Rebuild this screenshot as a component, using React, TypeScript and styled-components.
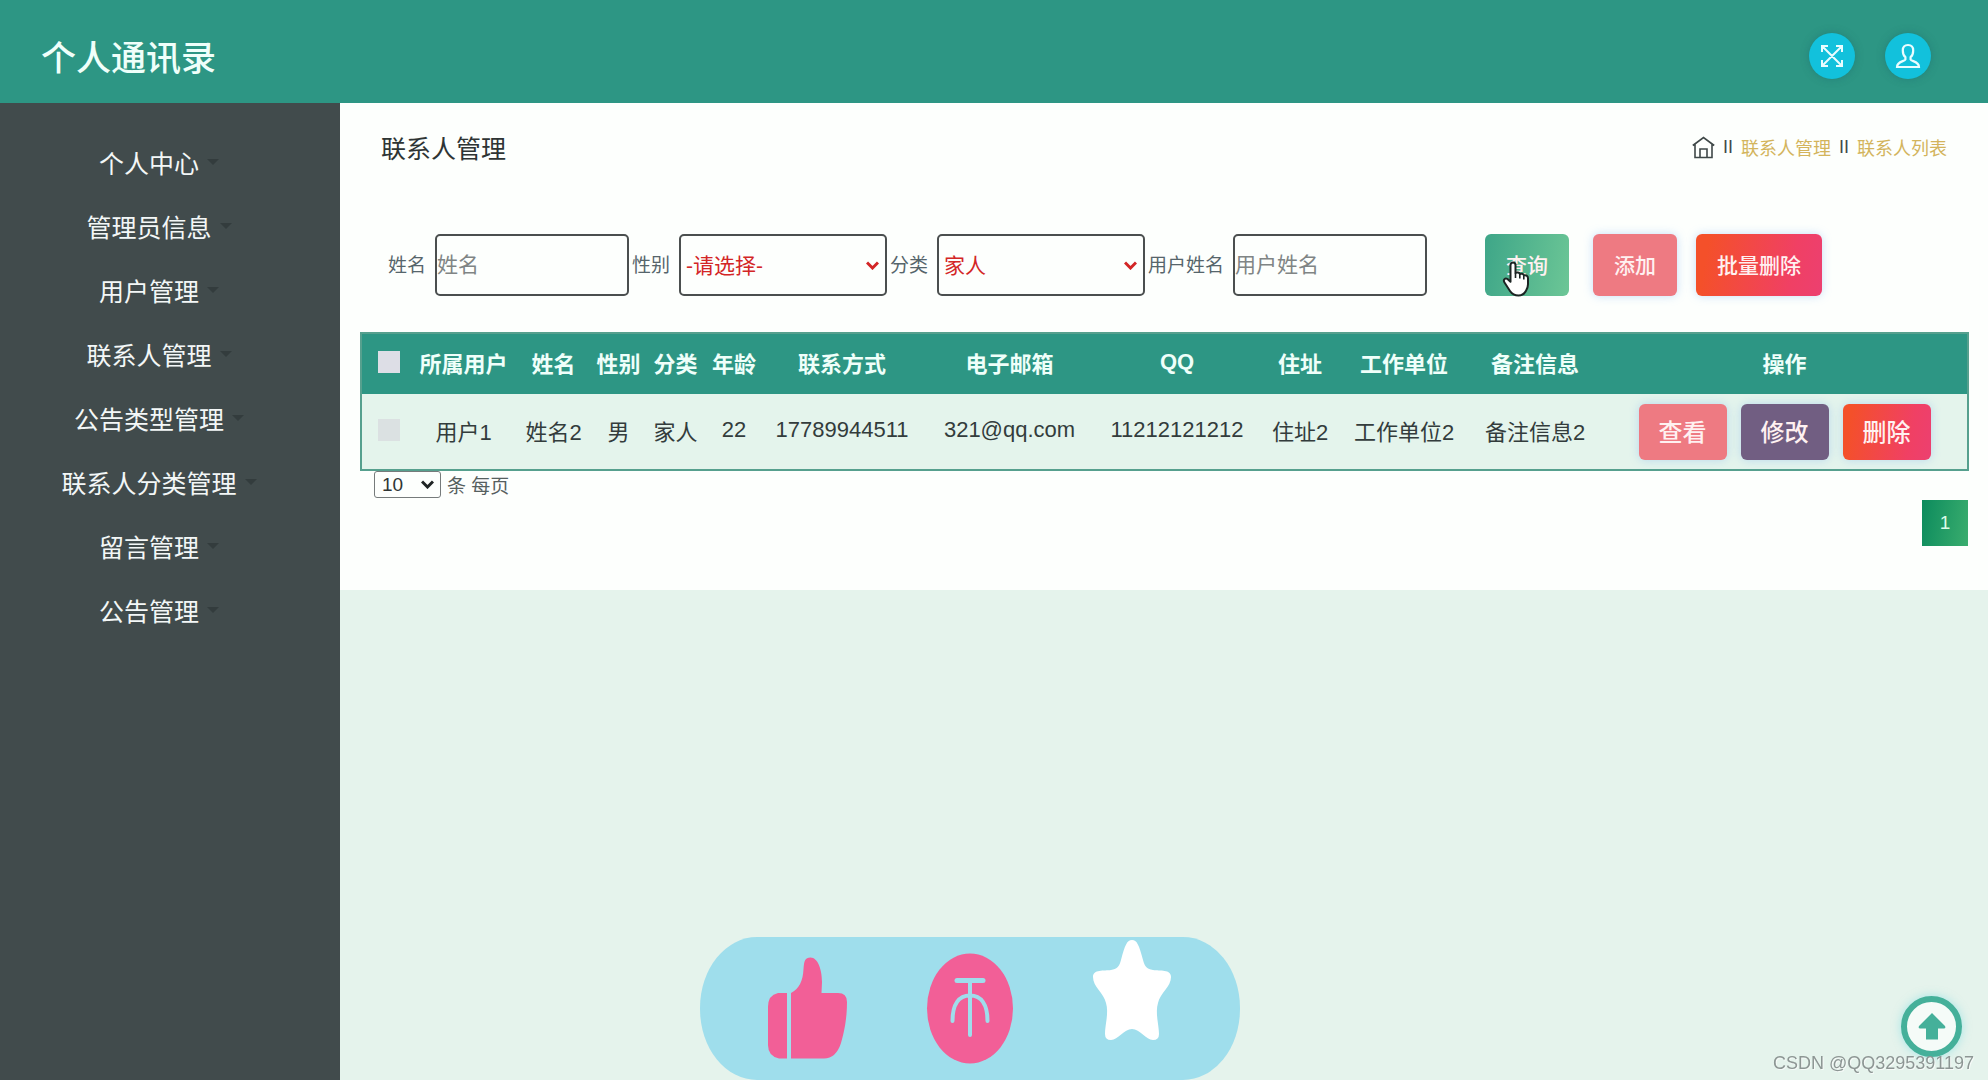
import React, { useState } from "react";
import styled, { createGlobalStyle, css } from "styled-components";

const GlobalStyle = createGlobalStyle`
  *, *::before, *::after { box-sizing: border-box; }
  body {
    margin: 0;
    background: #e5f3ec;
    color: #333c3c;
    font-family: "Liberation Sans", "Noto Sans CJK SC", sans-serif;
    font-size: 19px;
  }
  button, input, select { font-family: inherit; margin: 0; }
  a { color: inherit; text-decoration: none; }
`;

const Page = styled.div`
  display: flex;
  flex-direction: column;
  min-height: 100vh;
`;

const Header = styled.header`
  display: flex;
  align-items: center;
  justify-content: space-between;
  padding: 33px 57px 24px 41px;
  background: #2d9684;
`;

const Brand = styled.h1`
  margin: 0;
  padding-top: 6px;
  color: #effffa;
  font-size: 35px;
  font-weight: 500;
  line-height: 40px;
`;

const HeaderActions = styled.div`
  display: flex;
  gap: 30px;
`;

const RoundButton = styled.button`
  display: grid;
  place-items: center;
  width: 46px;
  height: 46px;
  padding: 0;
  border: 0;
  border-radius: 50%;
  background: #12c1dc;
  box-shadow: 0 0 8px rgba(20, 90, 100, 0.35);
  color: #e9fdff;
  cursor: pointer;
`;

const Body = styled.div`
  display: flex;
  flex: 1;
`;

const Sidebar = styled.nav`
  flex: 0 0 340px;
  padding: 27px 22px 27px 0;
  background: #414b4c;
`;

const Menu = styled.ul`
  margin: 0;
  padding: 0;
  list-style: none;
`;

const MenuLink = styled.a`
  display: flex;
  align-items: center;
  justify-content: center;
  gap: 8px;
  height: 64px;
  color: #f3f7f7;
  font-size: 25px;

  &::after {
    content: "";
    border: 6px solid transparent;
    border-top-color: #333c3d;
    border-bottom: 0;
  }
`;

const Main = styled.main`
  flex: 1;
  min-width: 0;
`;

const Panel = styled.section`
  padding: 26px 19px 44px 20px;
  background: #fdfffd;
`;

const PanelHead = styled.div`
  display: flex;
  align-items: center;
  justify-content: space-between;
  height: 36px;
  padding: 0 22px 0 21px;
`;

const PanelTitle = styled.h2`
  margin: 0;
  color: #2e3434;
  font-size: 25px;
  font-weight: 400;
`;

const Crumbs = styled.nav`
  display: flex;
  align-items: center;
  gap: 8px;
  color: #3f4848;
  font-size: 18px;
`;

const HomeLink = styled.a`
  display: grid;
`;

const CrumbLink = styled.a`
  color: #d3b45c;
`;

const Filters = styled.form`
  display: flex;
  align-items: center;
  margin: 69px 0 36px;
  padding-left: 28px;
`;

const Field = styled.div`
  display: flex;
  align-items: center;
  gap: 9px;
  margin-right: 3px;
`;

const FieldLabel = styled.label`
  padding-bottom: 4px;
  color: #56656b;
  font-size: 19px;
  white-space: nowrap;
`;

const control = css`
  height: 62px;
  border: 2px solid #4b4f4f;
  border-radius: 5px;
  background: #fdfffd;
  font-size: 21px;
`;

const TextInput = styled.input`
  ${control}
  width: 194px;
  padding: 0;
  color: #333c3c;

  &::placeholder { color: #808585; opacity: 1; }
`;

const SelectBox = styled.span<{ $inset: number }>`
  display: grid;
  align-items: center;

  > * { grid-area: 1 / 1; }
  > svg {
    justify-self: end;
    margin-right: ${(p) => p.$inset}px;
    pointer-events: none;
  }
`;

const FilterSelect = styled.select`
  ${control}
  appearance: none;
  width: 208px;
  padding: 0 5px;
  color: #d32626;
`;

const SizeSelect = styled.select`
  appearance: none;
  width: 67px;
  height: 27px;
  padding: 0 7px;
  border: 1px solid #767b7b;
  border-radius: 3px;
  background: #fdfffd;
  color: #2f3535;
  font-size: 19px;
`;

type Tone = "green" | "pink" | "purple" | "red";

const tones: Record<Tone, string> = {
  green: "linear-gradient(100deg, #3ea688, #6cc696)",
  pink: "#ee7a82",
  purple: "#715e82",
  red: "linear-gradient(100deg, #f4502a 10%, #f04064 75%, #ec4070)",
};

const Button = styled.button<{ $tone: Tone; $compact?: boolean }>`
  height: ${(p) => (p.$compact ? 56 : 62)}px;
  padding: 0 ${(p) => (p.$compact ? 20 : 21)}px 3px;
  border: 0;
  border-radius: 6px;
  background: ${(p) => tones[p.$tone]};
  box-shadow: ${(p) => (p.$tone === "green" ? "none" : "0 0 10px rgba(120, 175, 240, 0.4)")};
  color: #fff1f1;
  font-size: ${(p) => (p.$compact ? 24 : 21)}px;
  font-weight: 500;
  white-space: nowrap;
  cursor: pointer;
`;

const FilterActions = styled.div`
  display: flex;
  gap: 19px;
  margin-left: 55px;
`;

const SearchSlot = styled.div`
  position: relative;
  margin-right: 5px;
`;

const Pointer = styled.svg`
  position: absolute;
  left: 17px;
  top: 27px;
  pointer-events: none;
`;

const Table = styled.table`
  width: 100%;
  table-layout: fixed;
  border: 2px solid #56a08e;
  border-spacing: 0;
  background: #e4f4ec;
  font-size: 22px;
  text-align: center;
  white-space: nowrap;
`;

const HeadCell = styled.th`
  height: 60px;
  padding: 0 0 4px;
  background: #2d9684;
  color: #effffa;
`;

const Cell = styled.td`
  height: 75px;
  padding: 0 0 4px;
`;

const ActionCell = styled.td`
  padding: 0;
`;

const Check = styled.input<{ $faint?: boolean }>`
  appearance: none;
  display: block;
  width: 22px;
  height: 22px;
  margin: 0 auto;
  background: ${(p) => (p.$faint ? "#dbe1e2" : "#dddee6")};

  &:checked { background: #12c1dc; }
`;

const RowActions = styled.div`
  display: flex;
  justify-content: center;
  gap: 14px;
`;

const PageSize = styled.div`
  display: flex;
  align-items: center;
  gap: 6px;
  padding-left: 14px;
  color: #56605f;
`;

const Pagination = styled.nav`
  display: flex;
  justify-content: flex-end;
  margin-top: 2px;
  padding-right: 1px;
`;

const PageLink = styled.a`
  display: grid;
  place-items: center;
  width: 46px;
  height: 46px;
  background: linear-gradient(100deg, #0c8b5d, #3aad6e);
  color: #dcfbe8;
`;

const ReactionBar = styled.div`
  position: fixed;
  bottom: 0;
  left: 700px;
  width: 540px;
  height: 143px;
  border-radius: 57px / 71px;
  background: #9fdeec;
`;

const BackToTop = styled.button`
  position: fixed;
  right: 26px;
  bottom: 23px;
  display: grid;
  place-items: center;
  width: 61px;
  height: 61px;
  padding: 0;
  border: 6px solid #45b09a;
  border-radius: 50%;
  background: #f5fbf8;
  box-shadow: 0 0 10px rgba(100, 215, 225, 0.5);
  cursor: pointer;
`;

const Watermark = styled.div`
  position: fixed;
  right: 14px;
  bottom: 6px;
  color: #8d9694;
  font-size: 18px;
  line-height: 21px;
  text-shadow: 1px 1px 0 #f6faf8;
`;

const Chevron = ({ color }: { color: string }) => (
  <svg width="13" height="9" viewBox="0 0 13 9" fill="none" stroke={color} strokeWidth="3" aria-hidden="true">
    <path d="M1 1.5 6.5 7 12 1.5" />
  </svg>
);

const ExpandIcon = () => (
  <svg width="24" height="24" viewBox="0 0 24 24" fill="none" stroke="currentColor" strokeWidth="2" aria-hidden="true">
    <path d="M2 8V2h6M16 2h6v6M22 16v6h-6M8 22H2v-6M2.5 2.5l19 19M21.5 2.5l-19 19" />
  </svg>
);

const UserIcon = () => (
  <svg width="26" height="26" viewBox="0 0 26 26" fill="none" stroke="currentColor" strokeWidth="2.2" aria-hidden="true">
    <path d="M13 2C9.500 2 7.800 4.200 7.800 7.400c0 3 1 5.400 2.600 6.800v2.300C9.800 18.500 2 18.200 2 24h22c0-5.800-7.800-5.500-8.400-7.500v-2.300c1.600-1.400 2.600-3.800 2.600-6.800C18.200 4.200 16.500 2 13 2z" />
  </svg>
);

const HomeIcon = () => (
  <svg width="23" height="23" viewBox="0 0 23 23" fill="none" stroke="#3f4848" strokeWidth="1.600" aria-hidden="true">
    <path d="M.8 9.500 11.500 1.500l10.700 8M3 8.500V21.500h17V8.500M8 21.500V13h7v8.500" />
  </svg>
);

const menu = [
  "个人中心",
  "管理员信息",
  "用户管理",
  "联系人管理",
  "公告类型管理",
  "联系人分类管理",
  "留言管理",
  "公告管理",
];

const columns: { title: string; width: number }[] = [
  { title: "所属用户", width: 97 },
  { title: "姓名", width: 83 },
  { title: "性别", width: 47 },
  { title: "分类", width: 67 },
  { title: "年龄", width: 50 },
  { title: "联系方式", width: 166 },
  { title: "电子邮箱", width: 169 },
  { title: "QQ", width: 166 },
  { title: "住址", width: 80 },
  { title: "工作单位", width: 128 },
  { title: "备注信息", width: 134 },
  { title: "操作", width: 365 },
];

const rows = [
  ["用户1", "姓名2", "男", "家人", "22", "17789944511", "321@qq.com", "11212121212", "住址2", "工作单位2", "备注信息2"],
];

export default function App() {
  const [gender, setGender] = useState("");
  const [category, setCategory] = useState("家人");

  return (
    <Page>
      <GlobalStyle />
      <Header>
        <Brand>个人通讯录</Brand>
        <HeaderActions>
          <RoundButton type="button" aria-label="全屏"><ExpandIcon /></RoundButton>
          <RoundButton type="button" aria-label="用户"><UserIcon /></RoundButton>
        </HeaderActions>
      </Header>

      <Body>
        <Sidebar>
          <Menu>
            {menu.map((item) => (
              <li key={item}><MenuLink href="#">{item}</MenuLink></li>
            ))}
          </Menu>
        </Sidebar>

        <Main>
          <Panel>
            <PanelHead>
              <PanelTitle>联系人管理</PanelTitle>
              <Crumbs>
                <HomeLink href="#" aria-label="首页"><HomeIcon /></HomeLink>
                <span>II</span>
                <CrumbLink href="#">联系人管理</CrumbLink>
                <span>II</span>
                <CrumbLink href="#">联系人列表</CrumbLink>
              </Crumbs>
            </PanelHead>

            <Filters onSubmit={(e) => e.preventDefault()}>
              <Field>
                <FieldLabel htmlFor="name">姓名</FieldLabel>
                <TextInput id="name" placeholder="姓名" />
              </Field>
              <Field>
                <FieldLabel htmlFor="gender">性别</FieldLabel>
                <SelectBox $inset={8}>
                  <FilterSelect id="gender" value={gender} onChange={(e) => setGender(e.target.value)}>
                    <option value="">-请选择-</option>
                    <option>男</option>
                    <option>女</option>
                  </FilterSelect>
                  <Chevron color="#d32626" />
                </SelectBox>
              </Field>
              <Field>
                <FieldLabel htmlFor="category">分类</FieldLabel>
                <SelectBox $inset={8}>
                  <FilterSelect id="category" value={category} onChange={(e) => setCategory(e.target.value)}>
                    <option>家人</option>
                    <option>朋友</option>
                  </FilterSelect>
                  <Chevron color="#d32626" />
                </SelectBox>
              </Field>
              <Field>
                <FieldLabel htmlFor="owner">用户姓名</FieldLabel>
                <TextInput id="owner" placeholder="用户姓名" />
              </Field>
              <FilterActions>
                <SearchSlot>
                  <Button $tone="green" type="submit">查询</Button>
                  <Pointer width="28" height="36" viewBox="0 0 28 36" aria-hidden="true">
                    <path
                      d="M8.500 4c0-3.400 5-3.400 5 0v8c1.500-1 3.800-.6 4.300 1 1.500-.7 3.500-.2 4 1.300 2-.5 4.200.6 4.200 3v6c0 2.500-.8 4.500-2 6.500-1.500 3-3.500 4.700-7.500 4.700-4.500 0-6.500-1.500-8.500-4.500l-5.500-8.500c-1.800-2.800.8-5 3-3.500l3 2.800z"
                      fill="#fff"
                      stroke="#1c2423"
                      strokeWidth="2"
                      strokeLinejoin="round"
                    />
                    <path d="M13.500 12v5M17.800 13v4.500M21.800 14.500v4" stroke="#1c2423" strokeWidth="1.600" />
                  </Pointer>
                </SearchSlot>
                <Button $tone="pink" type="button">添加</Button>
                <Button $tone="red" type="button">批量删除</Button>
              </FilterActions>
            </Filters>

            <Table>
              <colgroup>
                <col style={{ width: 53 }} />
                {columns.map((c) => <col key={c.title} style={{ width: c.width }} />)}
              </colgroup>
              <thead>
                <tr>
                  <HeadCell scope="col"><Check type="checkbox" aria-label="全选" /></HeadCell>
                  {columns.map((c) => <HeadCell key={c.title} scope="col">{c.title}</HeadCell>)}
                </tr>
              </thead>
              <tbody>
                {rows.map((row) => (
                  <tr key={row[0]}>
                    <Cell><Check type="checkbox" $faint aria-label={row[0]} /></Cell>
                    {row.map((value, i) => <Cell key={columns[i].title}>{value}</Cell>)}
                    <ActionCell>
                      <RowActions>
                        <Button $compact $tone="pink" type="button">查看</Button>
                        <Button $compact $tone="purple" type="button">修改</Button>
                        <Button $compact $tone="red" type="button">删除</Button>
                      </RowActions>
                    </ActionCell>
                  </tr>
                ))}
              </tbody>
            </Table>

            <PageSize>
              <SelectBox $inset={7}>
                <SizeSelect id="size" aria-label="每页条数" defaultValue="10">
                  <option>10</option>
                  <option>20</option>
                  <option>50</option>
                </SizeSelect>
                <Chevron color="#1f2424" />
              </SelectBox>
              <label htmlFor="size">条 每页</label>
            </PageSize>
            <Pagination>
              <PageLink href="#">1</PageLink>
            </Pagination>
          </Panel>
        </Main>
      </Body>

      <ReactionBar>
        <svg width="540" height="143" viewBox="0 0 540 143" aria-hidden="true">
          <g fill="#f25f97">
            <path d="M87 56V121.500H79Q68 119 68 108V70Q68 58 78 56Z" />
            <path d="M91 56C99 52 103 44 103.500 32C104 24 105 20.500 110.500 20.500C118 20.500 122 33 122 45L121.500 56H138Q147 56 147 65C147 82 144 96 141 106Q136 121.500 124 121.500H91Z" />
            <ellipse cx="270" cy="71.500" rx="43" ry="55" />
          </g>
          <g fill="none" stroke="#9fdeec" strokeLinecap="round">
            <path d="M257 43.500H283" strokeWidth="5" />
            <path d="M270 44V98M252.500 84C252.500 67 259 58.500 270 58.500S287.500 67 287.500 84" strokeWidth="4" />
          </g>
          <path
            fill="#fff"
            d="M432 3C437 3 439 8 443 23C445 30 447 32 453 33C460 34 471 32 471 40C471 50 460 56 458 66C455 76 459 88 459 97Q459 103 453 103C446 103 440 92 432 92S418 103 411 103Q405 103 405 97C405 88 409 76 406 66C404 56 393 50 393 40C393 32 404 34 411 33C417 32 419 30 421 23C425 8 427 3 432 3Z"
          />
        </svg>
      </ReactionBar>

      <BackToTop type="button" aria-label="返回顶部">
        <svg width="28" height="28" viewBox="0 0 28 28" fill="#45b09a" aria-hidden="true">
          <path d="M14 0 27 13Q28 15.500 26 15.500H20V26.500H8V15.500H2Q0 15.500 1 13Z" />
        </svg>
      </BackToTop>
      <Watermark>CSDN @QQ3295391197</Watermark>
    </Page>
  );
}
